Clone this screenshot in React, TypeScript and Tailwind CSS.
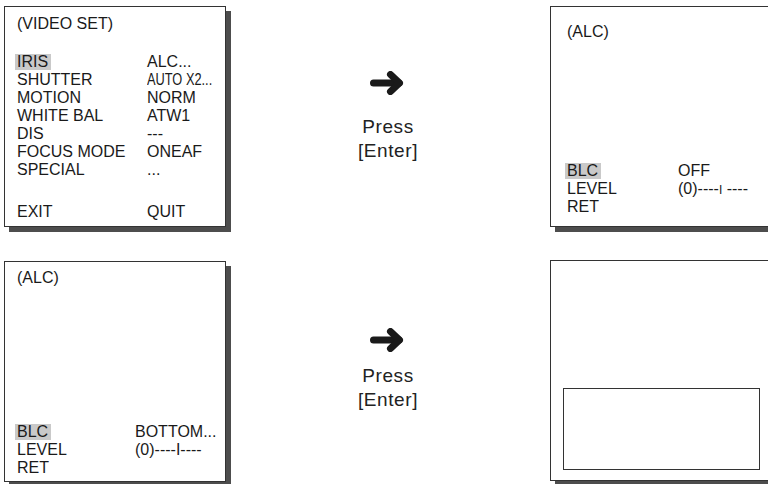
// OSD menu walkthrough — two steps of the camera's IRIS/ALC menu, each with a
// "Press [Enter]" arrow between the before / after screens.

import type { ReactNode } from 'react';

type Item = { label: string; value?: ReactNode; hl?: boolean };

function Label({ text, hl }: { text: string; hl?: boolean }) {
  if (!hl) return <span>{text}</span>;
  return (
    <span className="-ml-[2px] inline-block h-[16px] bg-[#c9c9c9] pl-[2px] pr-[3px] align-baseline leading-[16px]">
      {text}
    </span>
  );
}

function Rows({ items, labelW }: { items: Item[]; labelW: string }) {
  return (
    <div className="flex flex-col">
      {items.map((it) => (
        <div key={it.label} className="flex h-[18px]">
          <div className={`${labelW} shrink-0`}>
            <Label text={it.label} hl={it.hl} />
          </div>
          <div className="whitespace-nowrap">{it.value}</div>
        </div>
      ))}
    </div>
  );
}

function Screen({ className, children }: { className?: string; children?: ReactNode }) {
  return (
    <div
      className={`h-[221px] w-[222px] shrink-0 border border-[#333] bg-white shadow-[5px_5px_0_#4d4d4d] ${className ?? ''}`}
    >
      {children}
    </div>
  );
}

function PressEnter({ gap }: { gap: string }) {
  return (
    <div className="flex flex-col items-center">
      <svg width="34" height="24" viewBox="0 0 34 24" className="ml-[-1px]">
        <path d="M3.5 12H29" stroke="#1a1a1a" strokeWidth="7" strokeLinecap="round" />
        <path
          d="M20.5 3.5L29.5 12L20.5 20.5"
          fill="none"
          stroke="#1a1a1a"
          strokeWidth="7"
          strokeLinecap="round"
          strokeLinejoin="round"
        />
      </svg>
      <div className={`${gap} text-center text-[19px] leading-[24px] tracking-[0.6px] text-[#222]`}>
        <div>Press</div>
        <div>[Enter]</div>
      </div>
    </div>
  );
}

function Level({ spaced }: { spaced?: boolean }) {
  return (
    <span>
      (0)----
      <span className={spaced ? 'text-[12px]' : ''}>I</span>
      {spaced ? ' ----' : '----'}
    </span>
  );
}

export default function App() {
  return (
    <div className="relative h-[484px] w-[768px] overflow-hidden bg-white font-['Liberation_Sans',Arial,sans-serif] text-[16px] leading-[18px] text-[#1a1a1a]">
      {/* step 1 */}
      <div className="flex items-start pt-[6px]">
        <Screen className="ml-[4px]">
          <div className="pl-[12px] pt-[8px]">
            <div className="h-[18px]">(VIDEO SET)</div>
            <div className="mt-[20px]">
              <Rows
                labelW="w-[130px]"
                items={[
                  { label: 'IRIS', value: 'ALC...', hl: true },
                  {
                    label: 'SHUTTER',
                    value: (
                      <span className="inline-block origin-left scale-x-[0.8]">AUTO X2...</span>
                    ),
                  },
                  { label: 'MOTION', value: 'NORM' },
                  { label: 'WHITE BAL', value: 'ATW1' },
                  { label: 'DIS', value: '---' },
                  { label: 'FOCUS MODE', value: 'ONEAF' },
                  { label: 'SPECIAL', value: '...' },
                ]}
              />
            </div>
            <div className="mt-[24px]">
              <Rows labelW="w-[130px]" items={[{ label: 'EXIT', value: 'QUIT' }]} />
            </div>
          </div>
        </Screen>

        <div className="flex w-[324px] shrink-0 justify-center pt-[65px]">
          <PressEnter gap="mt-[20px]" />
        </div>

        <Screen>
          <div className="pl-[16px] pt-[16px]">
            <div className="h-[18px]">(ALC)</div>
            <div className="mt-[121px]">
              <Rows
                labelW="w-[111px]"
                items={[
                  { label: 'BLC', value: 'OFF', hl: true },
                  { label: 'LEVEL', value: <Level spaced /> },
                  { label: 'RET' },
                ]}
              />
            </div>
          </div>
        </Screen>
      </div>

      {/* step 2 */}
      <div className="mt-[34px] flex items-start">
        <Screen className="ml-[4px]">
          <div className="pl-[12px] pt-[7px]">
            <div className="h-[18px]">(ALC)</div>
            <div className="mt-[136px]">
              <Rows
                labelW="w-[118px]"
                items={[
                  { label: 'BLC', value: 'BOTTOM...', hl: true },
                  { label: 'LEVEL', value: <Level /> },
                  { label: 'RET' },
                ]}
              />
            </div>
          </div>
        </Screen>

        <div className="flex w-[324px] shrink-0 justify-center pt-[67px]">
          <PressEnter gap="mt-[12px]" />
        </div>

        <Screen className="-mt-px">
          <div className="ml-[12px] mt-[127px] h-[82px] w-[197px] border border-[#333]" />
        </Screen>
      </div>
    </div>
  );
}
